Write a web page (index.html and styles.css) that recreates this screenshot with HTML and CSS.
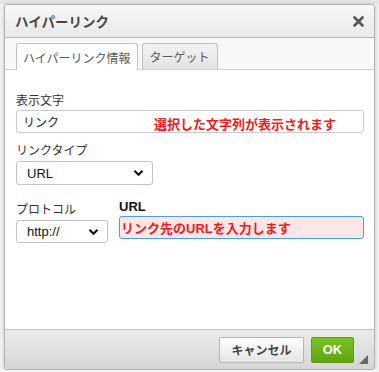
FILE: index.html
```html
<!DOCTYPE html>
<html lang="ja">
<head>
    <meta charset="UTF-8">
    <title>ハイパーリンク</title>
    <link rel="stylesheet" href="styles.css">
</head>
<body>
    <div class="toolbar"></div>

    <div class="dialog">
        <div class="dialog-title">
            <span>ハイパーリンク</span>
            <svg class="close" width="11" height="11" viewBox="0 0 11 11">
                <path d="M1.5 1.5 L9.5 9.5 M9.5 1.5 L1.5 9.5" stroke="#555" stroke-width="2.6" stroke-linecap="round"/>
            </svg>
        </div>

        <div class="tabs">
            <div class="tab active">ハイパーリンク情報</div>
            <div class="tab">ターゲット</div>
        </div>

        <div class="dialog-body">
            <div class="field">
                <label>表示文字</label>
                <div class="text-input">
                    リンク
                    <span class="note note-display">選択した文字列が表示されます</span>
                </div>
            </div>

            <div class="field">
                <label class="spaced">リンクタイプ</label>
                <div class="select select-type">
                    <span>URL</span>
                    <svg width="11" height="8" viewBox="0 0 11 8"><path d="M1.5 1.8 L5.5 5.8 L9.5 1.8" fill="none" stroke="#111" stroke-width="2.2"/></svg>
                </div>
            </div>

            <div class="url-row">
                <div class="protocol">
                    <label>プロトコル</label>
                    <div class="select select-protocol">
                        <span>http://</span>
                        <svg width="11" height="8" viewBox="0 0 11 8"><path d="M1.5 1.8 L5.5 5.8 L9.5 1.8" fill="none" stroke="#111" stroke-width="2.2"/></svg>
                    </div>
                </div>
                <div class="url">
                    <label class="bold">URL</label>
                    <div class="text-input focused">
                        <span class="note">リンク先のURLを入力します</span>
                    </div>
                </div>
            </div>
        </div>

        <div class="dialog-footer">
            <button class="btn">キャンセル</button>
            <button class="btn btn-ok">OK</button>
            <svg class="grip" width="9" height="9" viewBox="0 0 9 9"><path d="M9 0 L9 9 L0 9 Z" fill="#666"/></svg>
        </div>
    </div>
</body>
</html>
```

FILE: styles.css
```css
body {
    margin: 0;
    background: #f3f3f3;
    font-family: "Liberation Sans", "Noto Sans CJK JP", sans-serif;
    color: #333;
    overflow: hidden;
}

.toolbar {
    position: absolute;
    top: 0;
    left: 0;
    right: 0;
    height: 4px;
    background: #e8e8e8;
}

.dialog {
    position: relative;
    margin: 4px 0 0 4px;
    width: 369px;
    height: 364px;
    border: 1px solid #b2b2b2;
    border-radius: 3px;
    box-shadow: 0 0 4px rgba(0, 0, 0, 0.2);
    background: #f8f8f8;
    display: flex;
    flex-direction: column;
    overflow: hidden;
}

.dialog-title {
    height: 32px;
    flex: none;
    display: flex;
    align-items: center;
    justify-content: space-between;
    padding: 0 10px 0 10px;
    background: linear-gradient(#f8f8f8, #e9e9e9);
    border-bottom: 1px solid #b8b8b8;
    font-weight: bold;
    font-size: 13.5px;
    color: #474747;
}

.tabs {
    flex: none;
    display: flex;
    gap: 4px;
    padding: 5px 0 0 11px;
    background: #f8f8f8;
    border-bottom: 1px solid #d1d1d1;
    height: 26px;
}

.tab {
    height: 25px;
    padding: 0 7px;
    display: flex;
    align-items: center;
    font-size: 12px;
    color: #595959;
    border: 1px solid #c2c2c2;
    border-bottom: none;
    border-radius: 3px 3px 0 0;
    background: linear-gradient(#f2f2f2, #e4e4e4);
}

.tab.active {
    background: #fff;
    height: 26px;
    margin-bottom: -1px;
    padding: 0 6px;
}

.dialog-body {
    flex: 1;
    background: #fff;
    padding: 23px 10px 0 11px;
    display: flex;
    flex-direction: column;
    gap: 10px;
}

.field label,
.url-row label {
    display: block;
    font-size: 12px;
    line-height: 16px;
    margin-bottom: 1px;
    color: #333;
}

.field label.spaced {
    margin-bottom: 2px;
}

.url-row label.bold {
    font-weight: bold;
    font-size: 13px;
    color: #111;
}

.text-input {
    position: relative;
    height: 21px;
    border: 1px solid #c9cccf;
    border-radius: 3px;
    padding-left: 6px;
    display: flex;
    align-items: center;
    font-size: 12px;
    color: #222;
}

.text-input.focused {
    background: #fbe7e7;
    border-color: #4a9fe0;
    padding-left: 1px;
}

.note {
    color: #ec1c24;
    font-weight: bold;
    font-size: 13px;
}

.note-display {
    position: absolute;
    left: 137px;
    top: 3px;
}

.select {
    height: 22px;
    border: 1px solid #c4c4c4;
    border-radius: 3px;
    display: flex;
    align-items: center;
    justify-content: space-between;
    padding: 0 8px 0 10px;
    font-size: 13px;
    color: #111;
    background: #fff;
}

.select-type {
    width: 117px;
}

.select-protocol {
    width: 72px;
    height: 21px;
}

.url-row {
    display: flex;
    gap: 11px;
    margin-top: 1px;
}

.protocol {
    padding-top: 6px;
}

.protocol label {
    margin-bottom: 2px;
}

.url {
    flex: 1;
    padding-top: 3px;
}

.dialog-footer {
    flex: none;
    height: 39px;
    border-top: 1px solid #bfbfbf;
    background: linear-gradient(#ebebeb, #d5d5d5);
    display: flex;
    align-items: center;
    justify-content: flex-end;
    gap: 7px;
    padding-right: 20px;
    position: relative;
}

.btn {
    box-sizing: border-box;
    height: 26px;
    padding: 0;
    border: 1px solid #b6b6b6;
    border-radius: 2px;
    background: linear-gradient(#fff, #e4e4e4);
    font-family: "Liberation Sans", "Noto Sans CJK JP", sans-serif;
    font-weight: bold;
    font-size: 12px;
    color: #474747;
    width: 85px;
    white-space: nowrap;
}

.btn-ok {
    width: 43px;
    border-color: #5b9c1c;
    background: linear-gradient(#79c21f, #5fa414);
    color: #fff;
    font-size: 13px;
}

.grip {
    position: absolute;
    right: 6px;
    bottom: 5px;
}
```
